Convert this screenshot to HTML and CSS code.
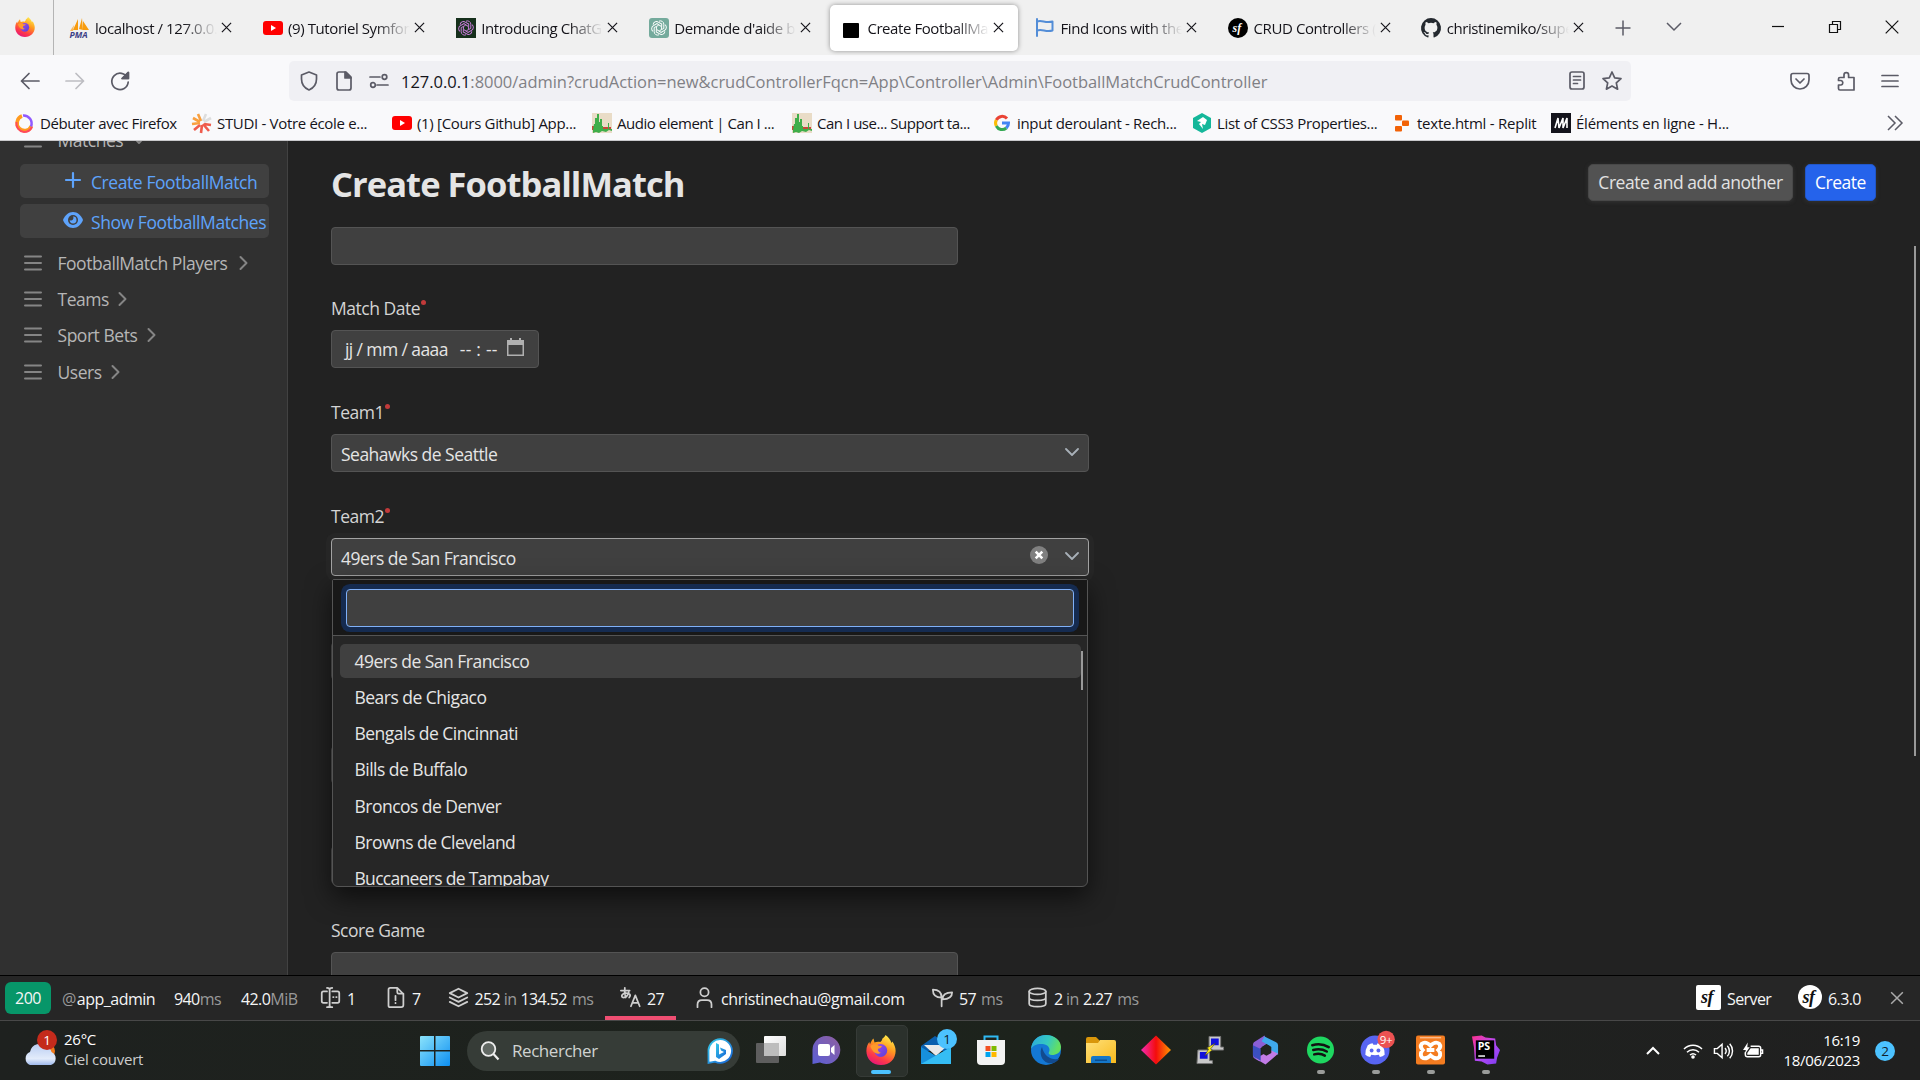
FILE: index.html
```html
<!DOCTYPE html>
<html lang="fr">
<head>
<meta charset="utf-8">
<title>Create FootballMatch</title>
<link rel="stylesheet" href="styles.css">
</head>
<body>
<svg class="defs" aria-hidden="true">
  <defs>
    <linearGradient id="flame" x1=".8" y1="0" x2=".3" y2="1"><stop offset="0" stop-color="#fff44f"/><stop offset=".4" stop-color="#ff9a1f"/><stop offset=".75" stop-color="#ff3b47"/><stop offset="1" stop-color="#e5157a"/></linearGradient>
    <linearGradient id="globe" x1="0" y1="0" x2="1" y2="1"><stop offset="0" stop-color="#a04bf0"/><stop offset="1" stop-color="#5b3fd6"/></linearGradient>
    <linearGradient id="winblue" x1="0" y1="0" x2="1" y2="1"><stop offset="0" stop-color="#8be3fb"/><stop offset="1" stop-color="#0d8ff2"/></linearGradient>
    <linearGradient id="edgeTop" x1="0" y1="0" x2="1" y2=".3"><stop offset="0" stop-color="#2aa5e0"/><stop offset=".6" stop-color="#35c9c0"/><stop offset="1" stop-color="#63df62"/></linearGradient>
    <linearGradient id="teams" x1="1" y1="0" x2="0" y2="1"><stop offset="0" stop-color="#8f5f9f"/><stop offset="1" stop-color="#5b5fd6"/></linearGradient>
    <linearGradient id="kite" x1="0" y1="0" x2="1" y2="0"><stop offset="0" stop-color="#f22bb5"/><stop offset=".5" stop-color="#f40c0c"/><stop offset="1" stop-color="#ff9800"/></linearGradient>
    <linearGradient id="folder" x1="0" y1="0" x2="1" y2="1"><stop offset="0" stop-color="#ffe07a"/><stop offset="1" stop-color="#f8ba1c"/></linearGradient>
    <linearGradient id="storm" x1="0" y1="0" x2="1" y2="1"><stop offset="0" stop-color="#ff318c"/><stop offset=".5" stop-color="#b74af7"/><stop offset="1" stop-color="#7b3cf0"/></linearGradient>
    <linearGradient id="cloud" x1="0" y1="0" x2="0" y2="1"><stop offset="0" stop-color="#b9cdf2"/><stop offset=".7" stop-color="#e3ecfb"/><stop offset="1" stop-color="#9fb9ec"/></linearGradient>
    <linearGradient id="bing" x1="0" y1="0" x2="1" y2="1"><stop offset="0" stop-color="#35c9e8"/><stop offset="1" stop-color="#1763d6"/></linearGradient>
    <symbol id="firefox" viewBox="0 0 24 24"><path fill="url(#flame)" d="M12 24C5 24 .3 19 .3 12.700c0-3.500 1.200-5.900 2.400-7.200l.5 2C4 5.500 4.800 3.600 6 2.800l.8 3.200c1.300-.6 3-.8 4.600-.4 0 0 1.800-1.400 1.600-2.600C14.400 2 15.500.8 15.600 0c2.600 1.700 4 4 4.800 6.400l.7-1.200c1.700 2.500 2.600 5 2.600 7.500C23.700 19 19 24 12 24z"/><circle cx="11.800" cy="12.400" r="5.200" fill="url(#globe)"/><path fill="#ff9a2b" d="M3.500 9c2-2.200 5-1.800 6.500-.4l2.800.2c-.4 1.400-2 1.900-3.200 2.200-.4 1.600.6 2.800 2.300 3.200-3 2-7-.4-8.400-5.200z"/></symbol>
    <symbol id="yt" viewBox="0 0 20 14"><rect width="20" height="14" rx="3" fill="red"/><path d="M8 4v6l5-3z" fill="#fff"/></symbol>
    <symbol id="knot" viewBox="0 0 20 20"><g fill="none" stroke="currentColor" stroke-width="1.200"><path id="petal" d="M10 1.500a4.200 4.200 0 0 1 6 4v5L10.500 13.400"/><use href="#petal" transform="rotate(60 10 10)"/><use href="#petal" transform="rotate(120 10 10)"/><use href="#petal" transform="rotate(180 10 10)"/><use href="#petal" transform="rotate(240 10 10)"/><use href="#petal" transform="rotate(300 10 10)"/></g></symbol>
    <symbol id="x" viewBox="0 0 12 12"><path d="M1 1l10 10M11 1L1 11" fill="none" stroke="currentColor" stroke-width="1.300"/></symbol>
    <symbol id="caniuse" viewBox="0 0 20 20"><path fill="#e9dcc7" d="M0 0h20v20H0z"/><path fill="#c8473c" d="M0 13h3v4H0zM11 14h8v3h-8z"/><path fill="#3fae4a" d="M1 17l1-6h1V5h2V1h2v8h1V6h2v7h1v3h5v-6h1v6h3v2l-3-1-3 2-4-1-3 2-3-1-3 1z"/></symbol>
    <symbol id="bars" viewBox="0 0 18 16"><path d="M1 1.500h16M1 8h16M1 14.500h16" stroke="currentColor" stroke-width="2" stroke-linecap="round"/></symbol>
    <symbol id="chev" viewBox="0 0 10 16"><path d="M1.500 2l6 6-6 6" fill="none" stroke="currentColor" stroke-width="2" stroke-linecap="round" stroke-linejoin="round"/></symbol>
    <symbol id="down" viewBox="0 0 14 9"><path d="M1 1l6 6 6-6" fill="none" stroke="currentColor" stroke-width="1.800" stroke-linecap="round" stroke-linejoin="round"/></symbol>
  </defs>
</svg>

<header class="browser">
  <div class="tabs">
    <div class="pin"><svg width="20" height="20"><use href="#firefox"/></svg></div>
    <div class="tab"><svg class="fav" viewBox="0 0 20 20"><path fill="#f89c0e" d="M3 12L8 1v11zM9 11L12 0l1 12zM13 12V3l6 9z"/><path fill="#f8b95c" d="M0 13l4-6-1 6z"/><text class="pma" x="-.5" y="19.500">PMA</text></svg><span class="name">localhost / 127.0.0.1</span><svg class="close"><use href="#x"/></svg></div>
    <div class="tab"><svg class="fav" viewBox="0 0 20 20"><use href="#yt" y="3" width="20" height="14"/></svg><span class="name">(9) Tutoriel Symfony</span><svg class="close"><use href="#x"/></svg></div>
    <div class="tab"><svg class="fav pink" viewBox="0 0 20 20"><path fill="#16301c" d="M0 0h20v20H0z"/><use href="#knot" x="2" y="2" width="16" height="16"/></svg><span class="name">Introducing ChatGPT</span><svg class="close"><use href="#x"/></svg></div>
    <div class="tab"><svg class="fav white" viewBox="0 0 20 20"><rect width="20" height="20" rx="3" fill="#74aa9c"/><use href="#knot" x="2" y="2" width="16" height="16"/></svg><span class="name">Demande d'aide bug</span><svg class="close"><use href="#x"/></svg></div>
    <div class="tab active"><svg class="fav" viewBox="0 0 20 20"><rect x="1" y="5" width="16" height="15" rx="1"/></svg><span class="name">Create FootballMatch</span><svg class="close"><use href="#x"/></svg></div>
    <div class="tab"><svg class="fav" viewBox="0 0 20 20" fill="none" stroke="#538dd7" stroke-width="2"><path d="M2 1v17M2 3.500c5-2 8 2 15.500 0v9c-7 2-10-2-15.500 0" stroke-linecap="round" stroke-linejoin="round"/></svg><span class="name">Find Icons with the Perfect</span><svg class="close"><use href="#x"/></svg></div>
    <div class="tab"><svg class="fav" viewBox="0 0 20 20"><circle cx="10" cy="10" r="10"/><text class="sf light" x="4.500" y="14">sf</text></svg><span class="name">CRUD Controllers (S</span><svg class="close"><use href="#x"/></svg></div>
    <div class="tab"><svg class="fav" viewBox="0 0 16 16"><path fill="#24292f" d="M8 0a8 8 0 0 0-2.500 15.600c.4.100.5-.2.500-.4v-1.400c-2.200.5-2.700-1-2.700-1-.4-.9-.9-1.200-.9-1.200-.7-.5.100-.5.100-.5.800.1 1.200.8 1.200.8.700 1.300 1.900.9 2.300.7.100-.5.300-.9.500-1.100-1.800-.2-3.600-.9-3.600-4 0-.9.300-1.600.8-2.100-.1-.2-.4-1 .1-2.100 0 0 .7-.2 2.200.8a7.600 7.600 0 0 1 4 0c1.500-1 2.200-.8 2.200-.8.500 1.100.2 1.900.1 2.100.5.600.8 1.300.8 2.100 0 3.100-1.900 3.800-3.700 4 .3.300.6.800.6 1.500v2.200c0 .2.100.5.500.4A8 8 0 0 0 8 0z"/></svg><span class="name">christinemiko/superbowl</span><svg class="close"><use href="#x"/></svg></div>
    <svg class="newtab" viewBox="0 0 16 16"><path d="M8 .5v15M.5 8h15"/></svg>
    <svg class="alltabs" viewBox="0 0 16 16"><path d="M1 4l7 7 7-7"/></svg>
    <div class="wincontrols">
      <svg viewBox="0 0 14 14"><path d="M1 6.500h12"/></svg>
      <svg viewBox="0 0 14 14"><path d="M1.500 4.500h8v8h-8zM4.500 4V1.500h8v8H10"/></svg>
      <svg viewBox="0 0 14 14"><path d="M.7.700l12.600 12.600M13.300.700L.7 13.300"/></svg>
    </div>
  </div>

  <div class="toolbar">
    <div class="nav">
      <svg viewBox="0 0 20 20"><path d="M19 10H1.500M9 2.500L1.500 10 9 17.500"/></svg>
      <svg class="off" viewBox="0 0 20 20"><path d="M1 10h17.500M11 2.500l7.500 7.500-7.500 7.500"/></svg>
      <svg viewBox="0 0 20 20"><path d="M17.500 7A8.200 8.200 0 1 0 18.200 11M18 1.500V7.500h-6z"/><path class="solid" d="M18.500 1.500v6h-6z"/></svg>
    </div>
    <div class="urlbar">
      <svg viewBox="0 0 20 20"><path d="M10 1l7.500 3v4c0 5.500-3 9-7.500 11-4.500-2-7.500-5.500-7.500-11V4z"/></svg>
      <svg viewBox="0 0 20 20"><path d="M3 3q0-2 2-2h7l5 5v11q0 2-2 2H5q-2 0-2-2z"/><path class="solid" d="M11 1l6 6h-6z"/></svg>
      <svg viewBox="0 0 20 20"><path d="M1 6h10M8 14h11"/><circle cx="15.500" cy="6" r="2.300"/><circle cx="4" cy="14" r="2.300"/></svg>
      <span class="url"><b>127.0.0.1</b>:8000/admin?crudAction=new&amp;crudControllerFqcn=App\Controller\Admin\FootballMatchCrudController</span>
      <svg viewBox="0 0 20 20"><rect x="3" y="1" width="14" height="17" rx="2"/><path d="M6.500 5.500h7M6.500 9h7M6.500 12.500h4"/></svg>
      <svg viewBox="0 0 20 20"><path d="M10 1l2.700 5.800 6.300.8-4.700 4.300 1.300 6.300-5.600-3.200-5.600 3.200 1.300-6.300L1 7.600l6.300-.8z"/></svg>
    </div>
    <div class="actions">
      <svg viewBox="0 0 20 20"><path d="M3 2.500h14q2 0 2 2V9a9 9 0 0 1-18 0V4.500q0-2 2-2zM6 8l4 4 4-4"/></svg>
      <svg viewBox="0 0 20 20"><path d="M4 6.500h4V4a2.300 2.300 0 0 1 4.600 0v2.500H18v12.500H4q-1.500 0-1.500-1.500V14H5a2.300 2.300 0 0 0 0-4.500H2.500V8Q2.500 6.500 4 6.500z"/></svg>
      <svg viewBox="0 0 20 20"><path d="M2 4.500h16M2 10h16M2 15.500h16"/></svg>
    </div>
  </div>

  <div class="bookmarks">
    <a><svg viewBox="0 0 20 20"><path d="M7 3A7.500 7.500 0 1 0 16.500 13" fill="none" stroke="#ff9a1f" stroke-width="3.500"/><path d="M1.500 9A8.500 8.500 0 0 0 9 19a9 9 0 0 0 8-5" fill="none" stroke="#ff4a5a" stroke-width="2"/><path d="M8 2.500a8 8 0 0 1 8 11" fill="none" stroke="#9059ff" stroke-width="2.500"/></svg>Débuter avec Firefox</a>
    <a><svg viewBox="0 0 20 20" stroke-width="2.600"><path stroke="#f9a03f" d="M9 8L6 1M8 9L1 5M8 10L0 11"/><path stroke="#ef5b4c" d="M8 12l-6 5M10 12l-1 8M11 11l6 7M12 11l7 1"/><path stroke="#ddd" d="M11 8l3-7M12 9l7-4"/></svg>STUDI - Votre école e...</a>
    <a><svg viewBox="0 0 20 20"><use href="#yt" y="3" width="20" height="14"/></svg>(1) [Cours Github] App...</a>
    <a class="narrow"><svg><use href="#caniuse"/></svg>Audio element | Can I ...</a>
    <a class="narrow"><svg><use href="#caniuse"/></svg>Can I use... Support ta...</a>
    <a><svg viewBox="0 0 20 20" fill="none" stroke-width="3"><path stroke="#ea4335" d="M15 5.500A6.500 6.500 0 0 0 4.300 7"/><path stroke="#fbbc05" d="M4.300 7a6.500 6.500 0 0 0 0 6"/><path stroke="#34a853" d="M4.300 13a6.500 6.500 0 0 0 10 2"/><path stroke="#4285f4" d="M14.300 15a6.500 6.500 0 0 0 2.200-5H10"/></svg>input deroulant - Rech...</a>
    <a><svg viewBox="0 0 20 20"><path fill="#15b79a" d="M10 0l9 5v10l-9 5-9-5V5z"/><path fill="#fff" d="M5 8l6-4 4 3-2 5-3-1 1 5-4-5 2-2z"/></svg>List of CSS3 Properties...</a>
    <a class="wide"><svg viewBox="0 0 20 20" fill="#f26207"><rect x="3" y="2" width="7" height="5.500" rx="1"/><rect x="10" y="7.500" width="7" height="5.500" rx="1"/><rect x="3" y="13" width="7" height="5.500" rx="1"/></svg>texte.html - Replit</a>
    <a class="wide"><svg viewBox="0 0 20 20"><path fill="#14141c" d="M0 0h20v20H0z"/><path d="M4 15L7 5l1 10 4-10v10l4-10v10" fill="none" stroke="#fff" stroke-width="1.600"/></svg>Éléments en ligne - H...</a>
    <svg class="more" viewBox="0 0 16 16"><path d="M1 1l7 7-7 7M8 1l7 7-7 7"/></svg>
  </div>
</header>

<main class="page">
  <aside class="sidebar">
    <a class="item cut"><svg class="bars"><use href="#bars"/></svg>Matches<svg class="drop" viewBox="0 0 14 9"><use href="#down" width="14" height="9"/></svg></a>
    <a class="sub"><svg viewBox="0 0 16 16"><path d="M8 1v14M1 8h14" stroke="currentColor" stroke-width="2.200" stroke-linecap="round"/></svg>Create FootballMatch</a>
    <a class="sub"><svg class="eye" viewBox="0 0 20 16"><path fill="currentColor" d="M10 0C5.500 0 1.800 3.500 0 8c1.800 4.500 5.500 8 10 8s8.200-3.500 10-8c-1.800-4.500-5.500-8-10-8z"/><circle cx="10" cy="8" r="5" fill="#404040"/><path fill="currentColor" d="M10 4.600A3.400 3.400 0 1 1 6.700 8 2.400 2.400 0 0 0 10 4.600z"/></svg>Show FootballMatches</a>
    <a class="item first"><svg class="bars"><use href="#bars"/></svg>FootballMatch Players<svg class="chev"><use href="#chev"/></svg></a>
    <a class="item"><svg class="bars"><use href="#bars"/></svg>Teams<svg class="chev"><use href="#chev"/></svg></a>
    <a class="item"><svg class="bars"><use href="#bars"/></svg>Sport Bets<svg class="chev"><use href="#chev"/></svg></a>
    <a class="item"><svg class="bars"><use href="#bars"/></svg>Users<svg class="chev"><use href="#chev"/></svg></a>
  </aside>

  <section class="content">
    <div class="head">
      <h1>Create FootballMatch</h1>
      <div class="buttons"><button class="btn">Create and add another</button><button class="btn primary">Create</button></div>
    </div>
    <form class="form">
      <div class="field"><div class="input"></div></div>
      <div class="field when"><label class="req">Match Date</label><div class="input date"><span>jj / mm / aaaa</span><span class="time">-- : --</span><svg viewBox="0 0 17 18"><path fill="#b0b0b0" fill-rule="evenodd" d="M3 0h2v2h7V0h2v2h3v16H0V2h3zM1.500 7v9.500h14V7z"/></svg></div></div>
      <div class="field"><label class="req">Team1</label><div class="input select">Seahawks de Seattle<svg class="arrow"><use href="#down"/></svg></div></div>
      <div class="field open"><label class="req">Team2</label><div class="input select focus">49ers de San Francisco<svg class="clear" viewBox="0 0 18 18"><circle cx="9" cy="9" r="9" fill="#808080"/><path d="M5.700 5.700l6.600 6.600M12.300 5.700l-6.600 6.600" stroke="#fff" stroke-width="2.600"/></svg><svg class="arrow"><use href="#down"/></svg></div>
        <div class="dropdown">
          <div class="search"><div class="query"></div></div>
          <div class="options">
            <div class="opt on">49ers de San Francisco</div>
            <div class="opt">Bears de Chigaco</div>
            <div class="opt">Bengals de Cincinnati</div>
            <div class="opt">Bills de Buffalo</div>
            <div class="opt">Broncos de Denver</div>
            <div class="opt">Browns de Cleveland</div>
            <div class="opt">Buccaneers de Tampabay</div>
            <i class="thumb"></i>
          </div>
        </div>
      </div>
      <div class="field"><div class="input"></div></div>
      <div class="field"><div class="input"></div></div>
      <div class="field covered"><div class="input"></div></div>
      <div class="field last"><label>Score Game</label><div class="input"></div></div>
    </form>
    <i class="scrollbar"></i>
  </section>
</main>

<div class="debug">
  <span class="status">200</span>
  <div class="blk"><em>@</em><span class="tight">app_admin</span></div>
  <div class="blk">940<em>ms</em></div>
  <div class="blk">42.0<em>MiB</em></div>
  <div class="blk"><svg viewBox="0 0 24 24"><path d="M8 5H4q-2 0-2 2v9q0 2 2 2h4M14 5h6q2 0 2 2v9q0 2-2 2h-6M11 3v18M8 1q3 0 3 2 0-2 3-2M8 23q3 0 3-2 0 2 3 2M15 11.500h.5M18.500 11.500h.5"/></svg>1</div>
  <div class="blk"><svg viewBox="0 0 24 24"><path d="M14 1v5q0 1.500 1.500 1.500H21M14 1H6Q4 1 4 3v18q0 2 2 2h12.500q2.500 0 2.500-2.500V8zM12 10v5M12 18v.5"/></svg>7</div>
  <div class="blk"><svg viewBox="0 0 24 24"><path d="M12 2L2 7l10 5 10-5zM2 12l10 5 10-5M2 17l10 5 10-5"/></svg>252<em class="in">in</em>134.52<em class="w">ms</em></div>
  <div class="blk warn"><svg viewBox="0 0 24 24"><path d="M1 4h10M5.500 1c-.5 5 0 8 1 11M10 6c-1 4-4 6-6.500 6-3-1-1-5 3.500-5 4 0 6 2 3.500 5M12.500 22l5-12.500 5 12.500M14.500 18h6"/></svg>27</div>
  <div class="blk"><svg viewBox="0 0 24 24"><circle cx="12" cy="6" r="4.700"/><path d="M4 23v-3q0-5 5-5h6q5 0 5 5v3"/></svg>christinechau@gmail.com</div>
  <div class="blk"><svg viewBox="0 0 24 24"><path d="M11 22V12C11 6 7 3 1 3c0 6 4 9 10 9M12 14c0-5 4-8 11-8 0 5-4 8-11 8"/></svg>57<em>ms</em></div>
  <div class="blk"><svg viewBox="0 0 24 24"><ellipse cx="12" cy="5" rx="9.500" ry="3.500"/><path d="M2.500 5v14c0 4.500 19 4.500 19 0V5M2.500 12c0 4.500 19 4.500 19 0"/></svg>2<em class="in">in</em>2.27<em class="w">ms</em></div>
  <div class="blk logo"><svg class="sfbox" viewBox="0 0 25 25"><rect width="25" height="25" rx="2"/><text class="sf big" x="5" y="18">sf</text></svg>Server</div>
  <div class="blk logo"><svg viewBox="0 0 24 24"><circle cx="12" cy="12" r="12"/><text class="sf big" x="4.500" y="17.500">sf</text></svg>6.3.0</div>
  <svg class="quit"><use href="#x"/></svg>
</div>

<footer class="taskbar">
  <div class="weather">
    <svg viewBox="0 0 40 40"><circle cx="26" cy="22" r="7" fill="#f27a1a"/><path fill="url(#cloud)" d="M8 36a7 7 0 0 1 0-13 10 10 0 0 1 17-5c3 1 4 3 4.500 5A7 7 0 0 1 29 36z"/><circle cx="25" cy="11" r="10" fill="#c42b1c"/><text class="count" x="25" y="16">1</text></svg>
    <p>26°C<br><span>Ciel couvert</span></p>
  </div>
  <svg class="start" viewBox="0 0 30 30" fill="url(#winblue)"><path d="M0 1q0-1 1-1h13v14H0zM15.500 0H29q1 0 1 1v13H15.500zM0 15.500h14V30H1q-1 0-1-1zM15.500 15.500H30V29q0 1-1 1H15.500z"/></svg>
  <div class="finder"><svg viewBox="0 0 20 20"><circle cx="8.500" cy="8" r="6.800" fill="#616863" stroke="#eee" stroke-width="1.800"/><path d="M13.500 13l5 5.500" stroke="#eee" stroke-width="2.200"/></svg><span>Rechercher</span><svg class="bing" viewBox="0 0 26 26"><path fill="#fff" stroke="url(#bing)" stroke-width="1.800" d="M13 1.200a11.800 11.800 0 1 1-5 22.400L1.500 25V12A11.800 11.800 0 0 1 13 1.200z"/><path fill="url(#bing)" d="M9 5l3 1.500v10l5-2.500-3-1.500-1-3 6 2.500v4L12 21l-3-2z"/></svg></div>
  <div class="apps">
    <div class="app"><svg viewBox="0 0 30 30"><defs><linearGradient id="tv" x1="0" y1="0" x2="1" y2="1"><stop offset="0" stop-color="#fff"/><stop offset="1" stop-color="#ddd"/></linearGradient></defs><rect y="8" width="23" height="20" rx="1" fill="#5e5e5e"/><rect x="8" y="1" width="22" height="20" rx="1" fill="url(#tv)"/><path fill="#bdbdbd" d="M8 8h15v13H8z"/></svg></div>
    <div class="app"><svg viewBox="0 0 30 30"><path fill="url(#teams)" d="M15 1a14 14 0 1 1-6 26.500L1.500 29V15A14 14 0 0 1 15 1z"/><rect x="7" y="9" width="12" height="12" rx="2" fill="#fff"/><path fill="#fff" d="M20 13l3.500-3v10L20 17z"/></svg></div>
    <div class="app current"><svg><use href="#firefox"/></svg></div>
    <div class="app"><svg viewBox="0 0 30 30"><path fill="#0a5fae" d="M0 11L14 1l16 10v5H0z"/><path fill="#e9e9e9" d="M3 10h24l-12 11z"/><path fill="#1790dc" d="M0 12l15 9 15-9v17H0z"/><path fill="#35bdf4" d="M0 29L30 12v17z"/><circle cx="26" cy="4" r="10" fill="#4cc2ff"/><text class="count dark" x="26" y="9">1</text></svg></div>
    <div class="app"><svg viewBox="0 0 30 30"><path d="M8.500 6V1.500h13V6" fill="none" stroke="#2fb9f3" stroke-width="2"/><path fill="#f3f3f3" d="M1 5h28v21q0 4-4 4H5q-4 0-4-4z"/><path fill="#f25022" d="M9.500 11h5v5h-5z"/><path fill="#7fba00" d="M15.500 11h5v5h-5z"/><path fill="#00a4ef" d="M9.500 17h5v5h-5z"/><path fill="#ffb900" d="M15.500 17h5v5h-5z"/></svg></div>
    <div class="app"><svg viewBox="0 0 30 30"><circle cx="15" cy="15" r="15" fill="#1478d4"/><path fill="url(#edgeTop)" d="M0 14C1 5 7 0 15 0c9 0 15 6 15 12 0 6-5 8-9 8-3 0-4-1.500-3-3 1-1.500 1-6-4-7.500C8 8 2 10 0 14z"/><path fill="#124b8f" d="M11 12c-3 5-1 14 6 16 5 1 9-1 11.500-4.500C22 26 13 22 11 12z"/></svg></div>
    <div class="app"><svg viewBox="0 0 30 30"><path fill="#d9960a" d="M0 4q0-2 2-2h8l4 4v4H0z"/><path fill="url(#folder)" d="M0 8h12l2-3h14q2 0 2 2v21H0z"/><path fill="#1577c8" d="M5 28v-5q0-2 2-2h16q2 0 2 2v5z"/><path fill="#0b4e90" d="M9 24.500h12v1.500H9z"/></svg></div>
    <div class="app"><svg viewBox="0 0 30 30"><path fill="url(#kite)" d="M15 .5L30 15 15 29.500 0 15z"/></svg></div>
    <div class="app"><svg viewBox="0 0 30 30"><path fill="#c9c9c9" stroke="#777" d="M13.500 1h12v11h3v3h-15zM2 15h12v11h3v3H1z"/><path fill="#1010dd" d="M15.500 3h8v7h-8zM4 17h8v7H4z"/><path fill="#ffee10" stroke="#333" stroke-width=".6" d="M20 8l-5 6 2 1-8 6 4-7-2-1z"/></svg></div>
    <div class="app"><svg viewBox="0 0 30 30"><path fill="#8b5fd6" d="M14 0L3 7q-1 1-1 3v11q0 2 2 3l5 3V14l8-6z"/><path fill="#3fa9ec" d="M14 1l12 6q2 1 2 3v10l-8-4v-5l-9-5z"/><path fill="#c17be6" d="M28 19l-13 11-10-6 5-3 10-6z"/><path fill="#3b4fc0" d="M2 10l8 4v12l-7-4q-1-1-1-2z"/><path fill="#202420" d="M11 12l5-3 5 3v6l-5 3-5-3z"/></svg></div>
    <div class="app run"><svg viewBox="0 0 30 30"><circle cx="15" cy="15" r="14" fill="#1ed760"/><path d="M6.500 10c6-1.700 12-1 17 2M7.500 15c5-1.400 10-.8 14 1.600M8.500 19.500c4-1 8-.5 11 1.300" fill="none" stroke="#121212" stroke-width="2.600" stroke-linecap="round"/></svg></div>
    <div class="app run"><svg viewBox="0 0 30 30"><circle cx="14.500" cy="15" r="15" fill="#5865f2"/><path fill="#fff" d="M7 10q3-2 5-2l.8 1.500h3.600L17 8q3 .5 5 2 3 5 2.500 10-2 2-5 2.200L18.500 20q-4 1-8 0l-1 2.200q-3-.2-5-2.200Q4 15 7 10z"/><circle cx="11" cy="15.500" r="2" fill="#5865f2"/><circle cx="18" cy="15.500" r="2" fill="#5865f2"/><circle cx="26" cy="4" r="9" fill="#ec5252"/><text class="count small" x="26" y="8.500">9+</text></svg></div>
    <div class="app run"><svg viewBox="0 0 30 30"><rect width="30" height="30" rx="2" fill="#f47c20"/><path fill="#fbb98a" d="M4 1.500h22v1.500H4z"/><path d="M6 8.500q4-3 9 2 5-5 9-2 2.500 3-1 6.500 3.500 3.500 1 7.500-4 3-9-2-5 5-9 2-2.500-4 1-7.500-3.500-3.500-1-6.500zM11 15h8" fill="none" stroke="#fff" stroke-width="4"/></svg></div>
    <div class="app run"><svg viewBox="0 0 30 30"><path fill="url(#storm)" d="M1 1l10-1 4 2 10 1 1 7 4 5-3 8-1 6-9 1-6-3-7-1-1-14z"/><path d="M5 5h19v19H5z"/><text class="ps" x="7" y="14.500">PS</text><path fill="#fff" d="M7.500 20.500h7V22h-7z"/></svg></div>
  </div>
  <div class="tray">
    <svg class="up" viewBox="0 0 14 10"><path d="M1 8l6-6 6 6"/></svg>
    <svg class="wifi" viewBox="0 0 20 16"><path d="M1 6a12.500 12.500 0 0 1 18 0M4 9.200a8.500 8.500 0 0 1 12 0M7 12a4.500 4.500 0 0 1 6 0"/><circle class="dot" cx="10" cy="14" r="1.800"/></svg>
    <svg class="vol" viewBox="0 0 22 18"><path d="M1.500 6.500h3L9.500 2v14l-5-4.500h-3zM12.500 6a4 4 0 0 1 0 6M15 3.500a8 8 0 0 1 0 11M17.500 1.500a11 11 0 0 1 0 15"/></svg>
    <svg class="bat" viewBox="0 0 22 18"><path d="M8 4h8.500q2 0 2 2v7q0 2-2 2h-12q-2 0-2-2v-3M19 8h1.500v3.500H19"/><path class="dot" d="M5 0L0 8h3l-1.500 5L7 5H4.500zM8 6h8.500v7h-12V11z"/></svg>
    <p>16:19<br>18/06/2023</p>
    <span class="notif">2</span>
  </div>
</footer>
</body>
</html>
```

FILE: styles.css
```css
* { box-sizing: border-box; }
body {
  margin: 0;
  width: 1920px;
  height: 1080px;
  overflow: hidden;
  display: flex;
  flex-direction: column;
  background: #222;
  font-family: "Open Sans", "Noto Sans", sans-serif;
  font-size: 15px;
}
svg { display: block; flex: none; overflow: visible; }
.defs { position: absolute; width: 0; height: 0; }
p, h1 { margin: 0; }

/* Browser chrome */
.browser { height: 141px; flex: none; background: #f9f9fb; border-bottom: 1px solid #c9c9cc; color: #15141a; }
.tabs { display: flex; align-items: center; height: 55px; background: #f0f0f0; }
.pin { width: 54px; height: 55px; padding: 17px 0 0 15px; border-right: 1px solid #b4b4b4; margin-right: 3.500px; }
.tab {
  display: flex; align-items: center;
  width: 188.100px; height: 46px; margin-right: 5px; padding-left: 12px;
  border-radius: 5px;
}
.tab.active { background: #fff; box-shadow: 0 0 5px rgba(0, 0, 0, .4); }
.fav { width: 20px; height: 20px; }
.fav.pink { color: #cf7fe0; }
.fav.white { color: #fff; }
.name {
  width: 122px; margin-left: 5.500px; height: 24px; line-height: 24px; overflow: hidden; white-space: nowrap; letter-spacing: -.42px;
  -webkit-mask-image: linear-gradient(to right, #000 88px, transparent 122px);
  mask-image: linear-gradient(to right, #000 88px, transparent 122px);
}
.close { width: 11px; height: 11px; margin: 0 0 1px 4px; }
.pma { font: italic 700 8.500px "Open Sans", sans-serif; fill: #3c3f86; }
.sf { font: italic 700 12px "Liberation Serif", serif; fill: #111; }
.sf.light { fill: #fff; }
.sf.big { font-size: 18px; }
.newtab, .alltabs { width: 16px; height: 16px; fill: none; stroke: #5b5b66; stroke-width: 1.500; }
.newtab { margin-left: 12.500px; }
.alltabs { margin: 0 0 2px 35px; }
.wincontrols { display: flex; gap: 43px; margin: 0 0 2px 89px; }
.wincontrols svg { width: 14px; height: 14px; fill: none; stroke: #111; stroke-width: 1.200; }

.toolbar { display: flex; align-items: center; height: 51px; fill: none; stroke: #5b5b66; stroke-width: 1.700; stroke-linecap: round; stroke-linejoin: round; }
.toolbar svg { width: 20px; height: 20px; }
.toolbar .solid { fill: #5b5b66; }
.nav { display: flex; gap: 25px; width: 289px; padding-left: 20px; }
.nav .off { stroke: #bdbdc2; }
.urlbar { display: flex; align-items: center; width: 1342px; height: 40px; padding: 0 9px 0 10px; border-radius: 5px; background: #f0f0f4; }
.urlbar svg + svg { margin-left: 15px; }
.url { flex: 1; margin-left: 12px; padding-top: 2px; font-size: 16.500px; letter-spacing: -.03px; color: #808085; white-space: nowrap; }
.url b { font-weight: 400; color: #15141a; }
.actions { display: flex; gap: 26px; margin-left: 159px; }
.actions svg:last-child { margin-left: -2px; }

.bookmarks { display: grid; grid-template-columns: 177px 200px 200px 200px 200px 200px 200px 159px 336px 16px; align-items: center; height: 34px; padding-left: 15px; }
.bookmarks a { display: flex; align-items: center; gap: 5px; letter-spacing: -.32px; white-space: nowrap; }
.bookmarks a:first-child { letter-spacing: -.4px; }
.bookmarks .narrow { letter-spacing: -.47px; }
.bookmarks .wide { letter-spacing: -.24px; }
.bookmarks a svg { width: 20px; height: 20px; }
.bookmarks .more { width: 16px; height: 16px; fill: none; stroke: #5b5b66; stroke-width: 1.500; }

/* Admin page */
.page { display: flex; flex: none; height: 834px; overflow: hidden; font-size: 17.500px; letter-spacing: -.48px; color: #e5e5e5; }
.sidebar { width: 288px; flex: none; background: #303030; border-right: 1px solid #424242; padding-left: 20px; color: #b6b6b6; }
.item { display: flex; align-items: center; height: 36.300px; padding-left: 4px; letter-spacing: -.47px; }
.item.cut { margin-top: -19px; height: 36px; margin-bottom: 6px; }
.item.first { margin-top: 1px; height: 37px; }
.bars { width: 18px; height: 16px; margin-right: 15.500px; color: #858585; }
.chev { width: 10px; height: 16px; margin-left: 12px; color: #858585; }
.item:not(.first) .chev { margin-left: 9.500px; }
.drop { width: 14px; height: 9px; margin-left: 9px; color: #858585; }
.sub { display: flex; align-items: center; height: 34px; width: 249px; margin-bottom: 6px; padding: 1px 0 0 44px; border-radius: 5px; background: #404040; color: #5ea3fb; white-space: nowrap; letter-spacing: -.42px; }
.sub svg { width: 16px; height: 16px; margin: 0 10px 4px 1px; }
.sub .eye { width: 20px; margin: 0 8px 4px -1px; }

.content { position: relative; flex: 1; padding-left: 43px; background: #222; }
.head { display: flex; justify-content: space-between; height: 86px; padding: 21px 44px 0 0; }
h1 { font-size: 34.500px; line-height: 44px; font-weight: 700; letter-spacing: -.94px; }
.buttons { display: flex; gap: 12px; padding-top: 2px; }
.btn { height: 37px; padding: 0 9px 1px; border: 1px solid #484848; border-radius: 5px; background: #525252; color: #e2e2e2; font: inherit; letter-spacing: -.47px; width: 205px; white-space: nowrap; box-shadow: 0 1px 4px rgba(80, 80, 80, .4); }
.btn.primary { width: 71px; background: #2563eb; border-color: #2156c8; color: #fff; }
.form { display: block; }
.field { height: 104px; display: flex; flex-direction: column; justify-content: flex-end; position: relative; }
.field:first-child { height: 37.500px; }
.field.when { height: 103px; }
.field label { height: 24px; line-height: 24px; margin-bottom: 10px; color: #d4d4d4; align-self: flex-start; }
.req::after { content: ""; display: inline-block; width: 5px; height: 5px; margin: 0 0 10px 1px; border-radius: 50%; background: #c23a3a; }
.input { display: flex; align-items: center; flex: none; width: 627px; height: 38px; border: 1px solid #545454; border-radius: 4px; background: #404040; }
.date { width: 208px; padding: 0 0 0 13px; letter-spacing: -.6px; }
.date .time { margin-left: 12px; letter-spacing: .25px; width: 41px; }
.date svg { width: 17px; height: 18px; margin: 0 0 4px 6px; }
.select { width: 758px; padding: 2px 0 0 9px; letter-spacing: -.52px; }
.select .arrow { width: 14px; height: 9px; margin: 0 9px 3px auto; color: #a8b0b8; }
.select.focus { border-color: #a3a3a3; box-shadow: 0 0 0 5px #262626; }
.select .clear { width: 18px; height: 18px; margin: 0 0 5px auto; }
.select .clear + .arrow { margin-left: 17px; }
.open { z-index: 2; }
.dropdown {
  position: absolute; left: 1px; top: 107px; width: 756px; height: 308px;
  border: 1px solid #545454; border-radius: 2px 2px 6px 6px; background: #262626;
  box-shadow: 0 10px 26px rgba(0, 0, 0, .6);
}
.search { height: 56px; padding: 9px 13px 0 13px; background: #181818; border-bottom: 1px solid #545454; }
.query { height: 38px; border: 1px solid #7fb0f8; border-radius: 4px; background: #404040; box-shadow: 0 0 0 5px #152b50; }
.options { position: relative; height: 250px; padding: 8px 6px 0 7px; overflow: hidden; }
.opt { height: 34px; line-height: 35px; margin-bottom: 2.300px; padding-left: 14.500px; border-radius: 5px; letter-spacing: -.52px; }
.opt.on { background: #404040; }
.opt:nth-child(7) { letter-spacing: -.7px; }
.thumb { position: absolute; right: 4px; top: 15px; width: 2px; height: 39px; background: #9a9a9a; }
.covered { height: 100px; }
.last { height: 106px; }
.scrollbar { position: absolute; right: 4px; top: 105px; width: 2px; height: 510px; background: #999; }

/* Profiler toolbar */
.debug {
  display: grid; align-items: center; flex: none;
  grid-template-columns: 57px 112px 67px 79px 65px 62.500px 157.500px 89px 238px 95px 669px 102px 92px 14px;
  height: 46px; padding-left: 5px; border-top: 1px solid #000; border-bottom: 1px solid #484848;
  background: #262626; color: #f5f5f5; font-size: 16px; letter-spacing: -.5px;
}
.status { width: 46px; height: 32px; line-height: 33px; border-radius: 6px; background: #079669; text-align: center; font-size: 16px; }
.blk { display: flex; align-items: center; height: 44px; white-space: nowrap; padding-top: 2px; letter-spacing: -.6px; }
.blk:nth-child(9) { letter-spacing: -.34px; }
.blk em { font-style: normal; color: #999; margin-left: 5px; letter-spacing: -.5px; }
.blk em.in { margin: 0 4px 0 3.500px; }
.blk em.w { margin-left: 5px; }
.blk em:first-child { margin: 0 1px 0 0; }
.tight { letter-spacing: -.5px; }
.blk svg { width: 21px; height: 21px; margin: 0 6px 4px 0; fill: none; stroke: #cfcfcf; stroke-width: 2; stroke-linecap: round; stroke-linejoin: round; }
.warn { width: 71px; padding-left: 15px; align-self: start; box-shadow: inset 0 -4px #ef4e72; }
.blk.logo svg { width: 24px; height: 24px; fill: #fff; stroke: none; }
.blk.logo .sf { fill: #111; }
.blk.logo .sfbox { width: 25px; height: 25px; }
.quit { width: 14px; height: 14px; color: #aaa; }

/* Windows taskbar */
.taskbar { display: flex; align-items: center; flex: 1; background: linear-gradient(90deg, #1e211f, #1d231c 55%, #1f211f 75%, #202020); color: #fff; letter-spacing: -.25px; }
.weather { display: flex; width: 420px; padding: 0 0 0 22px; }
.weather svg { width: 40px; height: 40px; margin-top: -2px; }
.weather p, .tray p { line-height: 20px; font-size: 15px; white-space: nowrap; }
.weather p { margin: -2px 0 2px 2px; }
.weather span { color: #ccc; }
.count { font: 13.500px "Open Sans", sans-serif; fill: #fff; text-anchor: middle; }
.count.dark { fill: #10212c; }
.count.small { font-size: 12px; }
.ps { font: 700 11px "Open Sans", sans-serif; fill: #fff; }
.start { width: 30px; height: 30px; }
.finder { display: flex; align-items: center; width: 273px; height: 40px; margin-left: 17px; padding: 0 7px 0 13px; border-radius: 20px; background: #363c37; font-size: 17px; color: #d0d3d1; letter-spacing: -.45px; }
.finder svg { width: 20px; height: 20px; }
.finder span { margin: 0 auto 0 12px; }
.finder .bing { width: 26px; height: 26px; }
.apps { display: flex; margin-left: 6px; width: 770px; }
.app { position: relative; width: 55px; height: 59px; flex: none; padding: 14px 0 0 10px; }
.app svg { position: relative; width: 30px; height: 30px; }
.app:nth-child(n+9) svg { width: 29px; }
.current::before { content: ""; position: absolute; left: 0; top: 4px; width: 50px; height: 50px; border: 1px solid #363b37; border-radius: 5px; background: #2b312c; }
.current::after { content: ""; position: absolute; left: 15px; top: 49px; width: 20px; height: 4px; border-radius: 2px; background: #4cc2ff; }
.run::after { content: ""; position: absolute; left: 21px; top: 49px; width: 8px; height: 4px; border-radius: 2px; background: #9a9c9a; }
.tray { display: flex; align-items: center; flex: 1; justify-content: flex-end; padding-right: 25px; fill: none; stroke: #fff; stroke-width: 1.500; letter-spacing: -.3px; }
.tray .dot { fill: #fff; stroke: none; }
.tray .up { width: 14px; height: 10px; stroke-width: 2; margin-right: 23px; }
.tray .wifi { width: 20px; height: 16px; margin-right: 10px; }
.tray .vol { width: 21px; height: 18px; margin-right: 9px; }
.tray .bat { width: 21px; height: 18px; }
.tray p { width: 96px; text-align: right; margin-bottom: 2px; }
.notif { width: 20px; height: 20px; margin-left: 15px; border-radius: 50%; background: #4cc2ff; color: #10212c; text-align: center; line-height: 20px; font-size: 13.500px; }
```
